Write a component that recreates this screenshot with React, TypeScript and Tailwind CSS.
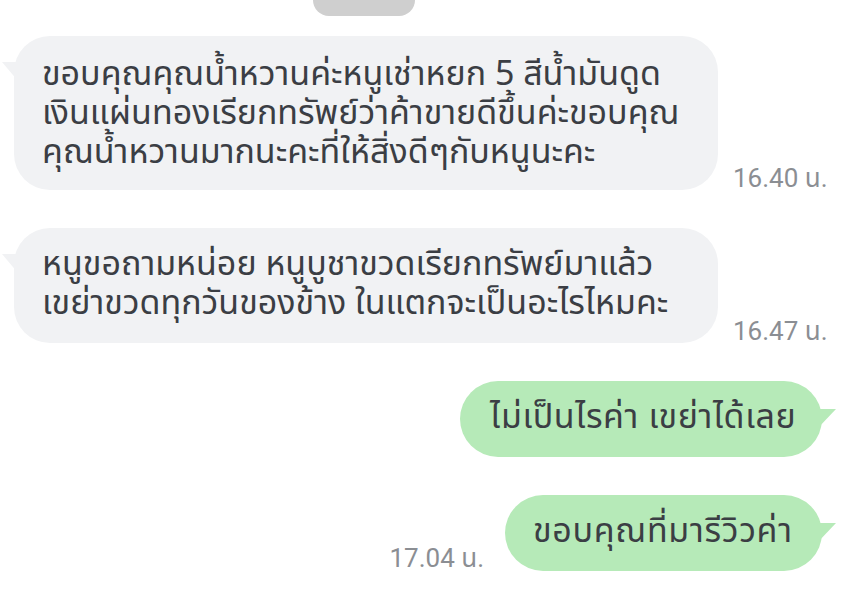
import React from "react";

function LeftTail() {
  return (
    <svg className="absolute left-[-12px] top-[25px]" width="16" height="20" viewBox="0 0 16 20">
      <path d="M0 1 L16 1 L16 20 Z" fill="#f1f2f4" />
    </svg>
  );
}

function RightTail() {
  return (
    <svg className="absolute right-[-14px] top-[27px]" width="18" height="20" viewBox="0 0 18 20">
      <path d="M18 1 L0 1 L0 20 Z" fill="#b6eab8" />
    </svg>
  );
}

const bubbleText = "text-[34px] leading-[39px] whitespace-nowrap";
const stamp = "text-[26px] leading-[26px] text-[#8b8e93] whitespace-nowrap font-['Roboto','Noto_Sans_Thai',sans-serif]";

export default function App() {
  return (
    <div className="w-[844px] h-[614px] bg-white overflow-hidden flex flex-col text-[#3b3e44] font-['Noto_Sans_Thai','Noto_Sans',sans-serif]">
      <div className="ml-[313px] w-[102px] h-[16px] bg-[#cfcfcf] rounded-b-[16px]" />

      <div className="mt-[20px] flex items-end">
        <div className="relative ml-[14px] w-[704px] h-[154px] rounded-[36px] bg-[#f1f2f4] px-[28px] pt-[19px]">
          <LeftTail />
          <div className={bubbleText}>
            <div>ขอบคุณคุณน้ำหวานค่ะหนูเช่าหยก 5 สีน้ำมันดูด</div>
            <div>เงินแผ่นทองเรียกทรัพย์ว่าค้าขายดีขึ้นค่ะขอบคุณ</div>
            <div>คุณน้ำหวานมากนะคะที่ให้สิ่งดีๆกับหนูนะคะ</div>
          </div>
        </div>
        <div className={"ml-[15px] mb-[-1px] " + stamp}>16.40 น.</div>
      </div>

      <div className="mt-[38px] flex items-end">
        <div className="relative ml-[14px] w-[704px] h-[115px] rounded-[36px] bg-[#f1f2f4] px-[28px] pt-[17px]">
          <LeftTail />
          <div className={bubbleText}>
            <div>หนูขอถามหน่อย หนูบูชาขวดเรียกทรัพย์มาแล้ว</div>
            <div>เขย่าขวดทุกวันของข้าง ในแตกจะเป็นอะไรไหมคะ</div>
          </div>
        </div>
        <div className={"ml-[15px] mb-[-1px] " + stamp}>16.47 น.</div>
      </div>

      <div className="mt-[38px] flex justify-end pr-[22px]">
        <div className="relative w-[362px] h-[76px] rounded-[38px] bg-[#b6eab8] pl-[30px] pt-[17px]">
          <RightTail />
          <div className={bubbleText + " tracking-[0.6px]"}>ไม่เป็นไรค่า เขย่าได้เลย</div>
        </div>
      </div>

      <div className="mt-[38px] flex justify-end items-end pr-[22px]">
        <div className={"mr-[21px] mb-[0px] " + stamp}>17.04 น.</div>
        <div className="relative w-[317px] h-[76px] rounded-[38px] bg-[#b6eab8] pl-[28px] pt-[17px]">
          <RightTail />
          <div className={bubbleText + " tracking-[0.7px]"}>ขอบคุณที่มารีวิวค่า</div>
        </div>
      </div>
    </div>
  );
}
